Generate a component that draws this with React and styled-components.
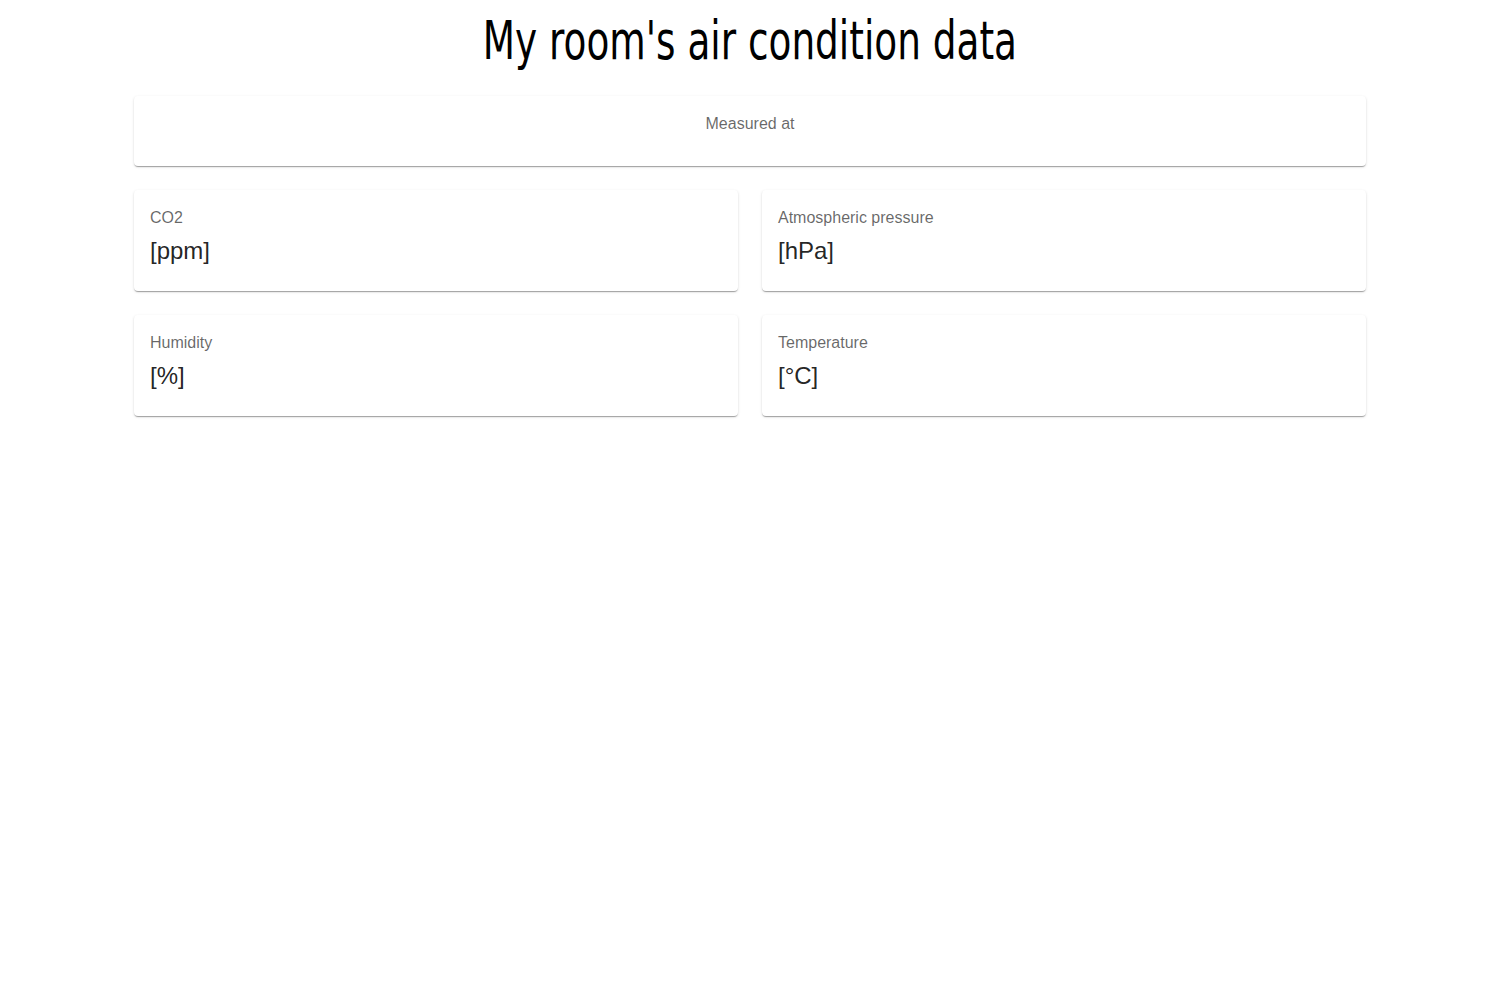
import React from "react";
import styled, { createGlobalStyle } from "styled-components";

const GlobalStyle = createGlobalStyle`
  body {
    margin: 0;
    background: #fff;
    font-family: "Liberation Sans", Arial, sans-serif;
  }
`;

const readings = [
  { label: "CO2", unit: "[ppm]" },
  { label: "Atmospheric pressure", unit: "[hPa]" },
  { label: "Humidity", unit: "[%]" },
  { label: "Temperature", unit: "[°C]" },
];

const App = () => {
  return (
    <>
      <GlobalStyle />
      <Page>
        <Title>
          <TitleText>My room's air condition data</TitleText>
        </Title>
        <Container>
          <Card>
            <CardContent center>
              <Label>Measured at</Label>
              <Time />
            </CardContent>
          </Card>
          <Grid>
            {readings.map((item) => (
              <Card key={item.label}>
                <CardContent>
                  <Label gutter>{item.label}</Label>
                  <Value>{item.unit}</Value>
                </CardContent>
              </Card>
            ))}
          </Grid>
        </Container>
      </Page>
    </>
  );
};

const Page = styled.main`
  padding-top: 14px;
  padding-bottom: 40px;
`;

const Title = styled.h1`
  margin: 0 0 28px;
  text-align: center;
  font-family: "Liberation Sans Narrow", "DejaVu Sans Condensed", sans-serif;
  font-weight: 400;
  font-size: 54px;
  line-height: 54px;
  color: #000;
`;

// the original uses a tall, narrow display face; squeeze the condensed fallback to match
const TitleText = styled.span`
  display: inline-block;
  transform: scaleX(0.77);
  white-space: nowrap;
`;

const Container = styled.div`
  max-width: 1280px;
  margin: 0 auto;
  padding: 0 24px;
  box-sizing: border-box;
  display: flex;
  flex-direction: column;
  gap: 24px;
`;

const Grid = styled.div`
  display: grid;
  grid-template-columns: 1fr 1fr;
  gap: 24px;
`;

const Card = styled.div`
  background: #fff;
  border-radius: 4px;
  box-shadow: 0px 2px 1px -1px rgba(0, 0, 0, 0.2),
    0px 1px 1px 0px rgba(0, 0, 0, 0.14), 0px 1px 3px 0px rgba(0, 0, 0, 0.12);
`;

const CardContent = styled.div`
  padding: 16px 16px 24px;
  text-align: ${(p) => (p.center ? "center" : "left")};
`;

const Label = styled.div`
  font-size: 16px;
  line-height: 24px;
  color: rgba(0, 0, 0, 0.6);
  margin-bottom: ${(p) => (p.gutter ? "5px" : "0")};
`;

const Time = styled.div`
  height: 6px;
`;

const Value = styled.div`
  font-size: 24px;
  line-height: 32px;
  color: rgba(0, 0, 0, 0.87);
`;

export default App;
